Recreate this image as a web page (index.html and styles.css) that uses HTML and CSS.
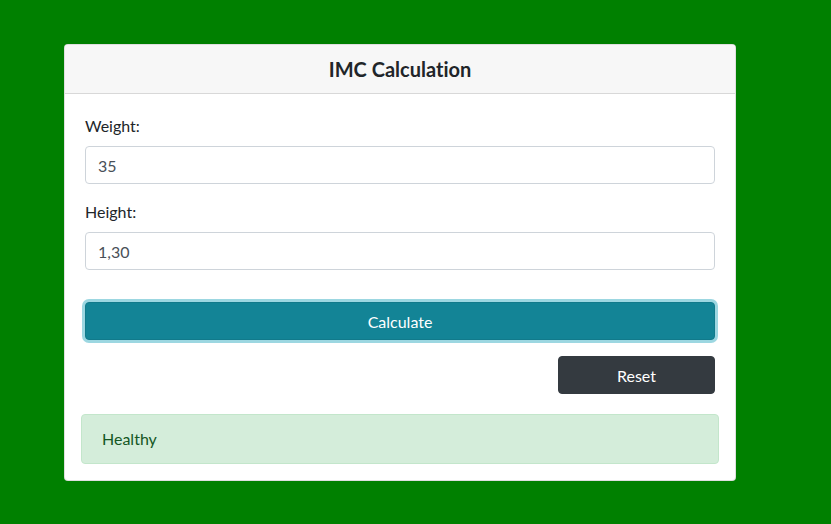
FILE: index.html
```html
<!DOCTYPE html>
<html>
<head>
<meta charset="utf-8">
<link rel="stylesheet" href="styles.css">
</head>
<body>
<div class="wrap">
  <div class="card">
    <div class="card-header"><h5 class="title">IMC Calculation</h5></div>
    <div class="card-body">
      <div class="form-group">
        <label class="label">Weight:</label>
        <input class="input" type="text" value="35">
      </div>
      <div class="form-group">
        <label class="label">Height:</label>
        <input class="input" type="text" value="1,30">
      </div>
      <button class="btn btn-info">Calculate</button>
      <div class="actions">
        <button class="btn btn-dark">Reset</button>
      </div>
    </div>
    <div class="alert">Healthy</div>
  </div>
</div>
</body>
</html>
```
FILE: styles.css
```css
* { box-sizing: border-box; }
html, body { margin: 0; }
body {
  background: #008000;
  font-family: "Lato", "Segoe UI", sans-serif;
  font-variant-ligatures: none;
  font-size: 16px;
  line-height: 1.5;
  color: #212529;
  height: 524px;
}
.wrap {
  padding: 44px 0 0 64px;
}
.card {
  width: 672px;
  background: #fff;
  border: 1px solid rgba(0,0,0,.125);
  border-radius: 4px;
  overflow: hidden;
}
.card-header {
  background: #f7f7f7;
  border-bottom: 1px solid rgba(0,0,0,.125);
  padding: 12px 20px;
  text-align: center;
}
.title {
  margin: 0;
  font-size: 20px;
  line-height: 24px;
  font-weight: 700;
  color: #212529;
}
.card-body {
  padding: 20px;
  display: flex;
  flex-direction: column;
}
.form-group {
  display: flex;
  flex-direction: column;
  margin-bottom: 16px;
}
.label {
  margin-bottom: 8px;
  line-height: 24px;
}
.input {
  height: 38px;
  padding: 6px 12px;
  font-family: inherit;
  font-variant-ligatures: none;
  font-size: 16px;
  color: #495057;
  border: 1px solid #ced4da;
  border-radius: 4px;
  background: #fff;
}
.btn {
  height: 38px;
  font-family: inherit;
  font-variant-ligatures: none;
  font-size: 16px;
  border: 1px solid transparent;
  border-radius: 4px;
  color: #fff;
  padding: 6px 12px;
}
.btn-info {
  margin-top: 16px;
  background: #138496;
  border-color: #117a8b;
  box-shadow: 0 0 0 3px rgba(58,176,195,.5);
}
.actions {
  display: flex;
  justify-content: flex-end;
  margin-top: 16px;
}
.btn-dark {
  width: 157px;
  background: #343a40;
  border-color: #343a40;
}
.alert {
  margin: 0 16px 16px;
  padding: 12px 20px;
  background: #d4edda;
  border: 1px solid #c3e6cb;
  border-radius: 4px;
  color: #155724;
  line-height: 24px;
}
```
